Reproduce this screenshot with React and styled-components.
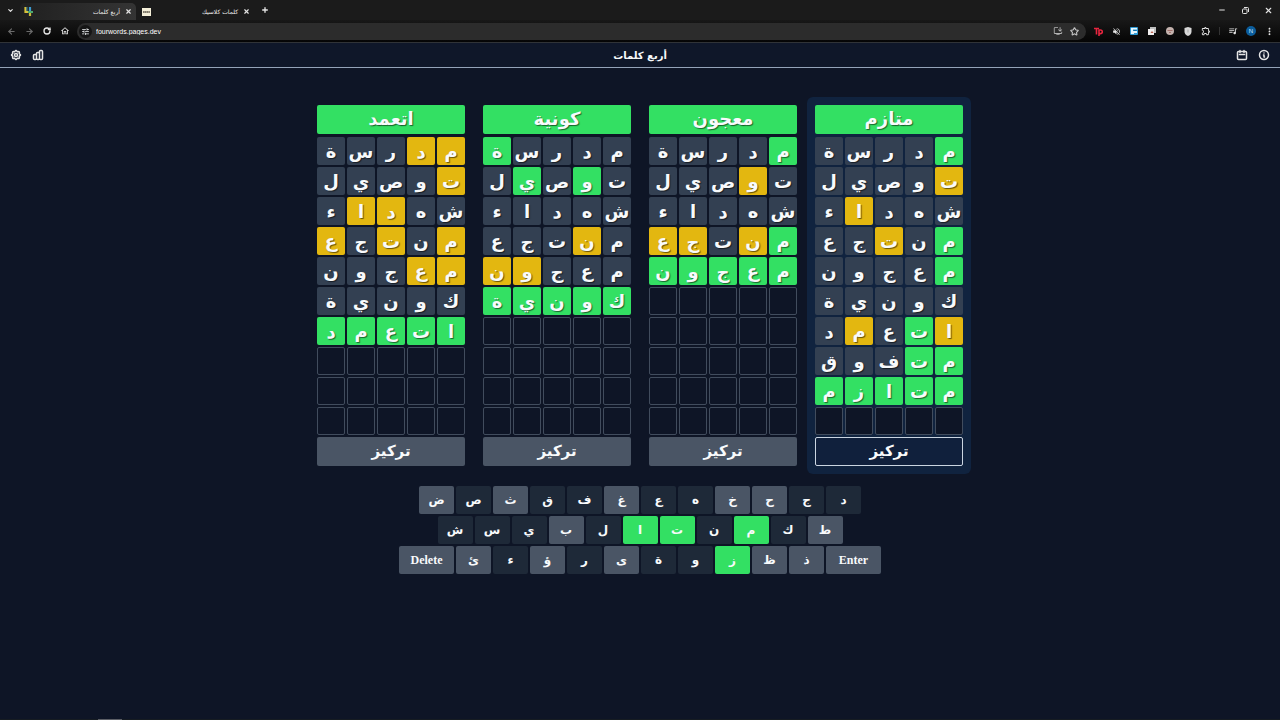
import React from 'react';
import styled, { createGlobalStyle } from 'styled-components';
import { ChevronDown, X, Plus, Minus, ArrowLeft, ArrowRight, RotateCw, Star } from 'lucide-react';
import { HiOutlineCog, HiOutlineChartBar, HiOutlineCalendar, HiOutlineInformationCircle } from 'react-icons/hi';
import { MdOutlineExtension, MdOutlineInstallDesktop, MdOutlineHome, MdQueueMusic, MdMoreVert, MdTune, MdVolumeOff } from 'react-icons/md';

const GlobalStyle = createGlobalStyle`
  * {
    box-sizing: border-box;
  }
  body {
    margin: 0;
    background: #0e1526;
    color: #f8fafc;
    font-family: 'DejaVu Sans', sans-serif;
  }
  button, input {
    margin: 0;
    padding: 0;
    border: 0;
    background: none;
    color: inherit;
    font: inherit;
  }
  svg {
    flex: none;
  }
`;

const GREEN = '#33e063';
const YELLOW = '#e3b710';
const SLATE = '#334052';

// g = right place, y = wrong place, . = not in the word
const boards = [
  {
    answer: 'متازم',
    focused: true,
    rows: [
      ['مدرسة', 'g....'],
      ['توصيل', 'y....'],
      ['شهداء', '...y.'],
      ['منتجع', 'g.y..'],
      ['معجون', 'g....'],
      ['كونية', '.....'],
      ['اتعمد', 'yg.y.'],
      ['متفوق', 'gg...'],
      ['متازم', 'ggggg']
    ]
  },
  {
    answer: 'معجون',
    rows: [
      ['مدرسة', 'g....'],
      ['توصيل', '.y...'],
      ['شهداء', '.....'],
      ['منتجع', 'gy.yy'],
      ['معجون', 'ggggg']
    ]
  },
  {
    answer: 'كونية',
    rows: [
      ['مدرسة', '....g'],
      ['توصيل', '.g.g.'],
      ['شهداء', '.....'],
      ['منتجع', '.y...'],
      ['معجون', '...yy'],
      ['كونية', 'ggggg']
    ]
  },
  {
    answer: 'اتعمد',
    rows: [
      ['مدرسة', 'yy...'],
      ['توصيل', 'y....'],
      ['شهداء', '..yy.'],
      ['منتجع', 'y.y.y'],
      ['معجون', 'yy...'],
      ['كونية', '.....'],
      ['اتعمد', 'ggggg']
    ]
  }
];

const keyRows = [
  ['د', 'ج', 'ح', 'خ', 'ه', 'ع', 'غ', 'ف', 'ق', 'ث', 'ص', 'ض'],
  ['ط', 'ك', 'م', 'ن', 'ت', 'ا', 'ل', 'ب', 'ي', 'س', 'ش'],
  ['Enter', 'ذ', 'ظ', 'ز', 'و', 'ة', 'ى', 'ر', 'ؤ', 'ء', 'ئ', 'Delete']
];

const ROW_COUNT = 10;

const keyState = (key) => {
  if ('متاز'.includes(key)) return 'g';
  if ('دجهعفقصكنليسشوةرء'.includes(key)) return 'used';
  return 'free';
};

const Page = styled.div`
  display: flex;
  flex-direction: column;
  min-height: 100vh;
`;

const TabStrip = styled.div`
  display: flex;
  align-items: center;
  height: 20px;
  padding: 0 6px 0 4px;
  background: #1b1b1b;
  color: #e4e4e4;
`;

const SmallButton = styled.button`
  display: flex;
  align-items: center;
  justify-content: center;
  flex: none;
  width: ${(props) => props.$width || 12}px;
  height: 12px;
  color: ${(props) => props.$color || '#e4e4e4'};
`;

const Tabs = styled.div`
  display: flex;
  align-self: flex-end;
  gap: 2px;
  margin-left: 4px;
`;

const Tab = styled.div`
  display: flex;
  align-items: center;
  gap: 2px;
  width: 116px;
  height: 17px;
  padding: 0 2px 0 4px;
  border-radius: 5px 5px 0 0;
  background: ${(props) => (props.$active ? 'linear-gradient(90deg, #202020, #343434)' : 'none')};
`;

const TabTitle = styled.span`
  flex: 1;
  direction: rtl;
  color: #f0f0f0;
  font-size: 6px;
  line-height: 12px;
  white-space: nowrap;
`;

const WindowButtons = styled.div`
  display: flex;
  gap: 11px;
  margin-left: auto;
`;

const Toolbar = styled.div`
  display: flex;
  align-items: center;
  gap: 6px;
  height: 23px;
  padding: 0 5px;
  border-bottom: 1px solid #303337;
  background: linear-gradient(#181818, #050505);
`;

const AddressBar = styled.label`
  display: flex;
  align-items: center;
  gap: 4px;
  flex: 1;
  height: 17px;
  padding: 0 6px 0 2px;
  border-radius: 9px;
  background: #2c2c2c;
`;

const SiteInfo = styled.span`
  display: flex;
  align-items: center;
  justify-content: center;
  width: 13px;
  height: 13px;
  border-radius: 50%;
  background: #151515;
`;

const AddressInput = styled.input`
  flex: 1;
  min-width: 0;
  color: #fff;
  font-family: 'Liberation Sans', sans-serif;
  font-size: 7px;
`;

const Divider = styled.span`
  width: 1px;
  height: 8px;
  margin: 0 1px;
  background: #333;
`;

const Profile = styled.span`
  display: flex;
  align-items: center;
  justify-content: center;
  width: 10px;
  height: 10px;
  border-radius: 50%;
  background: #0b5d9c;
  color: #d5ebff;
  font-family: 'Liberation Sans', sans-serif;
  font-size: 6px;
`;

const GameHeader = styled.header`
  display: grid;
  grid-template-columns: 1fr auto 1fr;
  align-items: center;
  height: 25px;
  padding: 0 10px;
  border-bottom: 1px solid #94a3b8;
  direction: rtl;
  background: #0f1729;
`;

const HeaderGroup = styled.div`
  display: flex;
  gap: 10px;
  justify-content: ${(props) => (props.$end ? 'flex-end' : 'flex-start')};

  path {
    stroke-width: 3px;
  }
`;

const Title = styled.h1`
  margin: 0;
  font-size: 10px;
  font-weight: bold;
`;

const Main = styled.main`
  flex: 1;
  display: flex;
  flex-direction: column;
  align-items: center;
  gap: 12px;
  padding-top: 29px;
  direction: rtl;
`;

const Boards = styled.div`
  display: flex;
  gap: 2px;
`;

const BoardPanel = styled.section`
  display: flex;
  flex-direction: column;
  width: 164px;
  padding: 8px;
  border-radius: 6px;
  background: ${(props) => (props.$focused ? '#10233f' : 'none')};
`;

const Answer = styled.div`
  height: 29px;
  margin-bottom: 3px;
  border-radius: 2px;
  background: ${GREEN};
  font-size: 18px;
  font-weight: bold;
  line-height: 27px;
  text-align: center;
  text-shadow: 1px 1px 1px rgba(0, 0, 0, 0.55);
`;

const Grid = styled.div`
  display: grid;
  grid-template-columns: repeat(5, 1fr);
  grid-auto-rows: 28px;
  gap: 2px;
`;

const tileColors = { g: GREEN, y: YELLOW, '.': SLATE };

const Tile = styled.div`
  min-width: 0;
  border-radius: 2px;
  border: ${(props) => (props.$state ? '0' : '1px solid #414c5d')};
  background: ${(props) => tileColors[props.$state] || '#0e1526'};
  font-size: 18px;
  font-weight: bold;
  line-height: 30px;
  text-align: center;
  text-shadow: 1px 1px 1px rgba(0, 0, 0, 0.55);
`;

const FocusButton = styled.button`
  height: 29px;
  margin-top: 2px;
  padding-bottom: 2px;
  border-radius: 2px;
  border: ${(props) => (props.$focused ? '1px solid #cbd5e1' : '0')};
  background: ${(props) => (props.$focused ? '#10203c' : '#4a5565')};
  font-size: 15px;
  font-weight: bold;
`;

const Keyboard = styled.div`
  display: flex;
  flex-direction: column;
  gap: 2px;
`;

const KeyRow = styled.div`
  display: flex;
  justify-content: center;
  gap: 2px;
`;

const keyColors = { g: GREEN, used: '#1e2938', free: '#4a5565' };

const Key = styled.button`
  width: ${(props) => (props.$wide ? 55 : 35)}px;
  height: 28px;
  border-radius: 2px;
  background: ${(props) => keyColors[props.$state]};
  font-family: ${(props) => (props.$wide ? "'Liberation Serif', serif" : "'DejaVu Sans', sans-serif")};
  font-size: 12px;
  font-weight: bold;
`;

const Taskbar = styled.div`
  height: 1px;
  padding-left: 98px;
  background: #161c22;
`;

const TaskbarMark = styled.div`
  width: 24px;
  height: 1px;
  background: #5c5f66;
`;

const FourIcon = () => (
  <svg width="9" height="9" viewBox="0 0 9 9">
    <path d="M1.500 0v5H4" fill="none" stroke="#d8c13b" strokeWidth="2.200" />
    <path d="M6 0v4" stroke="#3b9bd0" strokeWidth="2.200" />
    <path d="M6 4v5" stroke="#c9b93c" strokeWidth="2.200" />
    <path d="M4 5h5" stroke="#4da96d" strokeWidth="2" />
    <path d="M3 0v4" stroke="#2f7f9c" />
  </svg>
);

const ClassicIcon = () => (
  <svg width="9" height="8" viewBox="0 0 9 8">
    <rect width="9" height="8" fill="#f4efd9" />
    <path d="M1 4h7" stroke="#5b5548" strokeWidth="1.6" strokeDasharray="1.5 .3" />
  </svg>
);

const RestoreIcon = () => (
  <svg width="7" height="7" viewBox="0 0 7 7" fill="none" stroke="currentColor">
    <rect x=".5" y="2" width="4.5" height="4.500" rx=".8" />
    <path d="M2 .5h3.500a1 1 0 0 1 1 1V5" />
  </svg>
);

const TpIcon = () => (
  <svg width="9" height="9" viewBox="0 0 9 9" fill="none" stroke="#e8253f" strokeWidth="1.6">
    <path d="M0 1.500h5M2.500 1.500v6" />
    <path d="M5 9V3h1.500a1.600 1.600 0 0 1 0 3.600H5" />
  </svg>
);

const BlueNoteIcon = () => (
  <svg width="8" height="8" viewBox="0 0 8 8">
    <rect width="8" height="8" rx="1" fill="#319bd5" />
    <path d="M1 1h6v1.500H3V4h4v2H4v1H1z" fill="#e8f6fd" />
    <path d="M3.500 3h3v1h-3z" fill="#156fa8" />
  </svg>
);

const CardsIcon = () => (
  <svg width="8" height="8" viewBox="0 0 8 8">
    <path d="M2 0h6v6H2z" fill="#bdbdbd" />
    <path d="M0 2h6v6H0z" fill="#f1eeee" />
    <path d="M2.500 6l1.500-2 1.500 2z" fill="#b9604f" />
  </svg>
);

const CookieIcon = () => (
  <svg width="8" height="8" viewBox="0 0 8 8">
    <circle cx="4" cy="4" r="4" fill="#c4b3ae" />
    <path d="M1.500 3.500h5M3 5.500h2" stroke="#9b615b" strokeWidth=".8" />
  </svg>
);

const ShieldIcon = () => (
  <svg width="8" height="9" viewBox="0 0 8 9">
    <path d="M4 0l3.500 1v3.500Q7.500 7.500 4 9 .5 7.500 .5 4.500V1z" fill="#d8d8d8" />
    <path d="M4 2.500v3" stroke="#a8a8a8" />
  </svg>
);

const Browser = () => (
  <div>
    <TabStrip>
      <SmallButton aria-label="Search tabs"><ChevronDown size={7} strokeWidth={4} /></SmallButton>
      <Tabs>
        <Tab $active>
          <FourIcon />
          <TabTitle>أربع كلمات</TabTitle>
          <SmallButton aria-label="Close tab"><X size={7} strokeWidth={4} /></SmallButton>
        </Tab>
        <Tab>
          <ClassicIcon />
          <TabTitle>كلمات كلاسيك</TabTitle>
          <SmallButton aria-label="Close tab"><X size={7} strokeWidth={4} /></SmallButton>
        </Tab>
      </Tabs>
      <SmallButton $width={22} aria-label="New tab"><Plus size={8} strokeWidth={4} /></SmallButton>
      <WindowButtons>
        <SmallButton aria-label="Minimize"><Minus size={8} strokeWidth={3} /></SmallButton>
        <SmallButton aria-label="Restore"><RestoreIcon /></SmallButton>
        <SmallButton aria-label="Close"><X size={9} strokeWidth={3} /></SmallButton>
      </WindowButtons>
    </TabStrip>
    <Toolbar>
      <SmallButton aria-label="Back" $color="#6b6b6b"><ArrowLeft size={9} strokeWidth={3} /></SmallButton>
      <SmallButton aria-label="Forward" $color="#6b6b6b"><ArrowRight size={9} strokeWidth={3} /></SmallButton>
      <SmallButton aria-label="Reload"><RotateCw size={8} strokeWidth={4} /></SmallButton>
      <SmallButton aria-label="Home"><MdOutlineHome size={10} /></SmallButton>
      <AddressBar>
        <SiteInfo><MdTune size={9} /></SiteInfo>
        <AddressInput aria-label="Address" defaultValue="fourwords.pages.dev" />
        <SmallButton aria-label="Install" $color="#b5b5b5"><MdOutlineInstallDesktop size={10} /></SmallButton>
        <SmallButton aria-label="Bookmark" $color="#c5c5c5"><Star size={9} strokeWidth={3} /></SmallButton>
      </AddressBar>
      <SmallButton aria-label="Tp"><TpIcon /></SmallButton>
      <SmallButton aria-label="Mute"><MdVolumeOff size={9} /></SmallButton>
      <SmallButton aria-label="Notes"><BlueNoteIcon /></SmallButton>
      <SmallButton aria-label="Cards"><CardsIcon /></SmallButton>
      <SmallButton aria-label="Cookies"><CookieIcon /></SmallButton>
      <SmallButton aria-label="Shield"><ShieldIcon /></SmallButton>
      <SmallButton aria-label="Extensions"><MdOutlineExtension size={10} /></SmallButton>
      <Divider />
      <SmallButton aria-label="Media"><MdQueueMusic size={10} /></SmallButton>
      <SmallButton aria-label="Profile"><Profile>N</Profile></SmallButton>
      <SmallButton aria-label="Menu"><MdMoreVert size={11} /></SmallButton>
    </Toolbar>
  </div>
);

const Board = ({ board }) => {
  const tiles = [];
  for (let i = 0; i < ROW_COUNT; i++) {
    const [word, marks] = board.rows[i] || ['', ''];
    for (let j = 0; j < 5; j++) {
      tiles.push(<Tile key={i + '-' + j} $state={marks[j]}>{word[j]}</Tile>);
    }
  }
  return (
    <BoardPanel $focused={board.focused}>
      <Answer>{board.answer}</Answer>
      <Grid>{tiles}</Grid>
      <FocusButton $focused={board.focused}>تركيز</FocusButton>
    </BoardPanel>
  );
};

const App = () => (
  <Page>
    <GlobalStyle />
    <Browser />
    <GameHeader>
      <HeaderGroup>
        <SmallButton aria-label="Info"><HiOutlineInformationCircle size={12} /></SmallButton>
        <SmallButton aria-label="Calendar"><HiOutlineCalendar size={12} /></SmallButton>
      </HeaderGroup>
      <Title>أربع كلمات</Title>
      <HeaderGroup $end>
        <SmallButton aria-label="Statistics"><HiOutlineChartBar size={12} /></SmallButton>
        <SmallButton aria-label="Settings"><HiOutlineCog size={12} /></SmallButton>
      </HeaderGroup>
    </GameHeader>
    <Main>
      <Boards>
        {boards.map((board) => <Board key={board.answer} board={board} />)}
      </Boards>
      <Keyboard>
        {keyRows.map((row, i) => (
          <KeyRow key={i}>
            {row.map((key) => (
              <Key key={key} $wide={key.length > 1} $state={keyState(key)}>{key}</Key>
            ))}
          </KeyRow>
        ))}
      </Keyboard>
    </Main>
    <Taskbar><TaskbarMark /></Taskbar>
  </Page>
);

export default App;
